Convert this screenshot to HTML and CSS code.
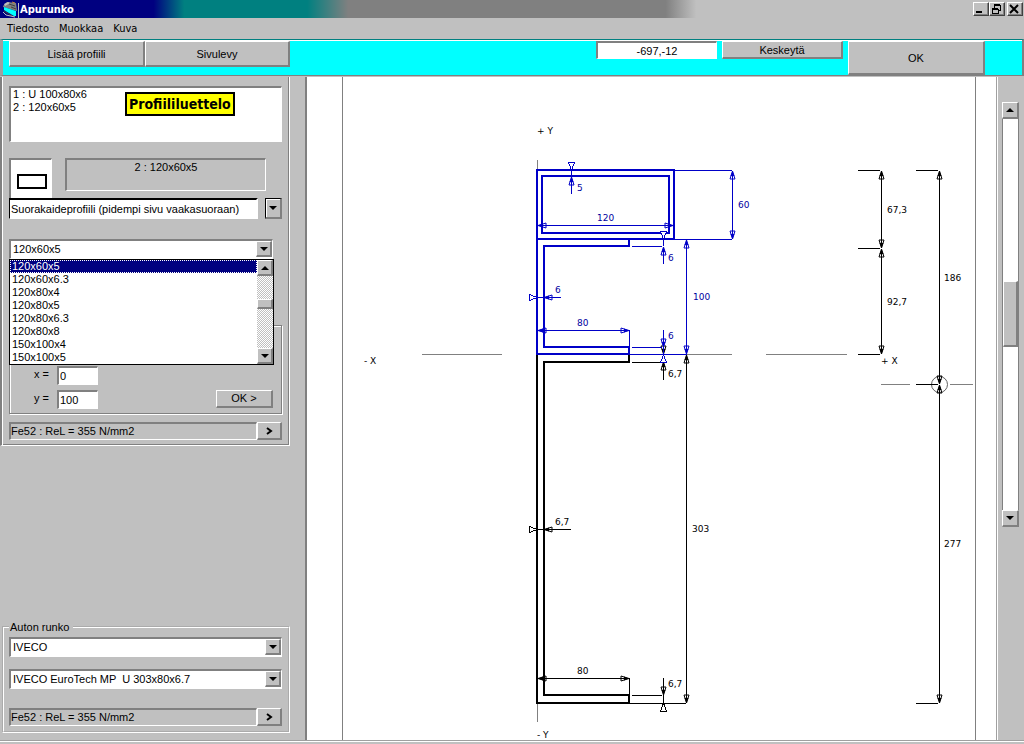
FILE: index.html
```html
<!DOCTYPE html>
<html lang="fi">
<head>
    <meta charset="UTF-8">
    <meta name="viewport" content="width=device-width, initial-scale=1.0">
    <title>Apurunko</title>
    <link rel="stylesheet" href="styles.css">
</head>
<body>
    <header class="titlebar">
        <svg class="app-icon" width="18" height="17" viewBox="0 0 18 17">
            <path d="M1 5L5 1L14 2L15 10L8 8L1 6Z" fill="#808080"/>
            <path d="M2 3L6 1L8 2L3 5Z" fill="#c0c0c0"/>
            <path d="M7 3L13 5M9 6L14 8" stroke="#404040"/>
            <path d="M2 6L14 10V15L12 15L2 9Z" fill="#00ffff"/>
            <path d="M2 10L12 16" stroke="#404040"/>
            <path d="M10 1L13 2" stroke="#c08040"/>
            <path d="M1 11L4 14L13 16M16.5 2V17" stroke="#c0c0c0" fill="none"/>
        </svg>
        <h1 class="title">Apurunko</h1>
        <div class="window-buttons">
            <button class="win-btn" aria-label="Minimize"><svg width="12" height="10"><path d="M2 8H8" stroke="#000" stroke-width="2"/></svg></button>
            <button class="win-btn" aria-label="Restore"><svg width="12" height="10" shape-rendering="crispEdges"><path d="M4 1H10V6H8M4 1V4" stroke="#000" fill="none"/><path d="M4 1H10" stroke="#000" stroke-width="2"/><path d="M2 5H8V9H2Z" stroke="#000" fill="none"/><path d="M2 5H8" stroke="#000" stroke-width="2"/></svg></button>
            <button class="win-btn close" aria-label="Close"><svg width="12" height="10"><path d="M2 1L10 9M10 1L2 9" stroke="#000" stroke-width="2"/></svg></button>
        </div>
    </header>

    <nav class="menubar">
        <button class="menu">Tiedosto</button>
        <button class="menu">Muokkaa</button>
        <button class="menu">Kuva</button>
    </nav>

    <div class="toolbar">
        <button class="btn tool">Lisää profiili</button>
        <button class="btn tool">Sivulevy</button>
        <div class="toolbar-right">
            <input class="sunken coords" type="text" value="-697,-12" aria-label="Koordinaatit">
            <button class="btn cancel">Keskeytä</button>
            <button class="btn ok">OK</button>
        </div>
    </div>

    <main class="workspace">
        <aside class="sidebar">
            <section class="panel">
                <div class="profile-list">
                    <select class="sunken list" size="4" aria-labelledby="list-title">
                        <option>1 : U 100x80x6</option>
                        <option>2 : 120x60x5</option>
                    </select>
                    <strong class="list-title" id="list-title">Profiililuettelo</strong>
                </div>

                <div class="current">
                    <div class="sunken shape"><svg width="32" height="18"><rect x="3" y="3" width="28" height="13" fill="#fff" stroke="#000" stroke-width="2"/></svg></div>
                    <output class="sunken current-name">2 : 120x60x5</output>
                </div>
                <div class="type-row">
                    <input class="type" type="text" value="Suorakaideprofiili (pidempi sivu vaakasuoraan)" aria-label="Profiilityyppi">
                    <button class="btn arrow type-arrow" aria-label="Valitse tyyppi"><svg width="8" height="4"><path d="M0 0H8L4 4Z"/></svg></button>
                </div>

                <div class="size">
                    <div class="sunken combo">
                        <select aria-label="Koko">
                            <option>120x60x5</option>
                        </select>
                        <span class="btn arrow"><svg width="8" height="4"><path d="M0 0H8L4 4Z"/></svg></span>
                    </div>
                    <div class="dropdown">
                        <select class="list" size="8" aria-label="Koot">
                            <option selected>120x60x5</option>
                            <option>120x60x6.3</option>
                            <option>120x80x4</option>
                            <option>120x80x5</option>
                            <option>120x80x6.3</option>
                            <option>120x80x8</option>
                            <option>150x100x4</option>
                            <option>150x100x5</option>
                        </select>
                        <div class="scroll">
                            <button class="btn arrow" aria-label="Ylös"><svg width="8" height="4"><path d="M0 4H8L4 0Z"/></svg></button>
                            <div class="track"><div class="btn thumb"></div></div>
                            <button class="btn arrow" aria-label="Alas"><svg width="8" height="4"><path d="M0 0H8L4 4Z"/></svg></button>
                        </div>
                    </div>
                </div>

                <div class="position">
                    <div class="field">
                        <label for="pos-x">x =</label>
                        <input class="sunken" id="pos-x" type="text" value="0">
                    </div>
                    <div class="field">
                        <label for="pos-y">y =</label>
                        <input class="sunken" id="pos-y" type="text" value="100">
                        <button class="btn apply">OK &gt;</button>
                    </div>
                </div>

                <div class="material">
                    <output class="sunken">Fe52 : ReL = 355 N/mm2</output>
                    <button class="btn more" aria-label="Materiaali"><svg width="8" height="8"><path d="M2 1L6 4L2 7" fill="none" stroke="#000" stroke-width="2"/></svg></button>
                </div>
            </section>

            <fieldset class="frame">
                <legend>Auton runko</legend>
                <div class="sunken combo">
                    <select aria-label="Merkki">
                        <option>IVECO</option>
                    </select>
                    <span class="btn arrow"><svg width="8" height="4"><path d="M0 0H8L4 4Z"/></svg></span>
                </div>
                <div class="sunken combo model">
                    <select aria-label="Malli">
                        <option>IVECO EuroTech MP &nbsp;U 303x80x6.7</option>
                    </select>
                    <span class="btn arrow"><svg width="8" height="4"><path d="M0 0H8L4 4Z"/></svg></span>
                </div>
                <div class="material">
                    <output class="sunken">Fe52 : ReL = 355 N/mm2</output>
                    <button class="btn more" aria-label="Materiaali"><svg width="8" height="8"><path d="M2 1L6 4L2 7" fill="none" stroke="#000" stroke-width="2"/></svg></button>
                </div>
            </fieldset>
        </aside>

        <div class="canvas">
            <svg class="drawing" viewBox="307 77 689 663">
                <defs>
                    <marker id="tip-blue" markerUnits="userSpaceOnUse" markerWidth="20" markerHeight="20" orient="auto-start-reverse" overflow="visible">
                        <path d="M0 0L-8 -2.5V2.5Z" fill="none" stroke="#0000c8"/>
                        <path d="M0 0L-5 -2V2Z" fill="#0000c8"/>
                    </marker>
                    <marker id="tip-black" markerUnits="userSpaceOnUse" markerWidth="20" markerHeight="20" orient="auto-start-reverse" overflow="visible">
                        <path d="M0 0L-8 -2.5V2.5Z" fill="none" stroke="#000"/>
                        <path d="M0 0L-5 -2V2Z" fill="#000"/>
                    </marker>
                </defs>

                <!-- page edges and axes -->
                <g class="axis">
                    <path d="M342.5 77V740M975.5 77V740"/>
                    <path d="M537.5 160V170M537.5 704V722"/>
                    <path d="M422 354.5H502M687 354.5H732M766 354.5H847"/>
                    <path d="M881 384.5H910M950 384.5H973"/>
                </g>
                <circle class="centre" cx="939.5" cy="384.5" r="8"/>

                <!-- vehicle frame, U 303x80x6.7 -->
                <g class="black">
                    <path class="outline" d="M537 354V703H629V695H544V362H629V354"/>
                    <path d="M632 362.5H662M629 703.5H686M632 695.5H662M629.5 678V695"/>
                    <path d="M663.5 354V362M663.5 695V703M537 529.5H544"/>
                    <path class="both" d="M686.5 355V703"/>
                    <path class="both" d="M538 678.5H629"/>
                    <path class="end" d="M571 529.5H544"/>
                    <path class="end" d="M663.5 346V354"/>
                    <path class="end" d="M663.5 380V362"/>
                    <path class="end" d="M663.5 678V695"/>
                    <path class="head" d="M537 529.5L529.5 526.5V532.5Z"/>
                    <path class="head" d="M663.5 703L660.5 711.5H666.5Z"/>
                </g>

                <!-- profile 1, U 100x80x6, and profile 2, 120x60x5 -->
                <g class="blue">
                    <path class="outline" d="M629 239V246H544V347H629V354H537V239"/>
                    <rect class="outline" x="537" y="170" width="137" height="69"/>
                    <rect class="outline" x="542" y="176" width="127" height="57"/>
                    <path d="M674 170.5H732M674 239.5H732M632 246.5H662M632 347.5H662M629 354.5H687M629.5 330V347"/>
                    <path d="M571.5 163V176M663.5 239V246M663.5 347V354M537 297.5H544"/>
                    <path class="both" d="M732.5 171V239"/>
                    <path class="both" d="M538 225.5H673"/>
                    <path class="both" d="M686.5 240V354"/>
                    <path class="both" d="M538 330.5H629"/>
                    <path class="end" d="M571.5 194V177"/>
                    <path class="end" d="M663.5 264V247"/>
                    <path class="end" d="M561 297.5H544"/>
                    <path class="end" d="M663.5 330V347"/>
                    <path class="head" d="M571.5 170L568.5 162.5H574.5Z"/>
                    <path class="head" d="M663.5 239L660.5 231.5H666.5Z"/>
                    <path class="head" d="M537 297.5L529.5 294.5V300.5Z"/>
                    <path class="head" d="M663.5 355L660.5 362.5H666.5Z"/>
                </g>

                <!-- centre of gravity dimensions -->
                <g class="black">
                    <path d="M858 170.5H880M858 248.5H880M858 354.5H880"/>
                    <path d="M916 170.5H938M916 384.5H938M916 703.5H938"/>
                    <path class="both" d="M881.5 171V248"/>
                    <path class="both" d="M881.5 249V354"/>
                    <path class="both" d="M939.5 171V384"/>
                    <path class="both" d="M939.5 385V703"/>
                </g>

                <g class="text">
                    <text x="537" y="134">+ Y</text>
                    <text x="537" y="738">- Y</text>
                    <text x="364" y="364">- X</text>
                    <text x="881" y="364">+ X</text>
                    <text x="668" y="377">6,7</text>
                    <text x="668" y="687">6,7</text>
                    <text x="555" y="525">6,7</text>
                    <text x="577" y="674">80</text>
                    <text x="692" y="532">303</text>
                    <text x="887" y="213">67,3</text>
                    <text x="887" y="305">92,7</text>
                    <text x="944" y="281">186</text>
                    <text x="944" y="547">277</text>
                </g>
                <g class="text text-blue">
                    <text x="577" y="191">5</text>
                    <text x="597" y="221">120</text>
                    <text x="738" y="208">60</text>
                    <text x="668" y="261">6</text>
                    <text x="668" y="339">6</text>
                    <text x="555" y="293">6</text>
                    <text x="577" y="326">80</text>
                    <text x="693" y="300">100</text>
                </g>
            </svg>
        </div>

        <div class="scroll-area">
            <div class="scroll canvas-scroll">
                <button class="btn arrow" aria-label="Vieritä ylös"><svg width="8" height="4"><path d="M0 4H8L4 0Z"/></svg></button>
                <div class="track"><div class="btn thumb"></div></div>
                <button class="btn arrow" aria-label="Vieritä alas"><svg width="8" height="4"><path d="M0 0H8L4 4Z"/></svg></button>
            </div>
        </div>
    </main>
    <footer class="statusbar"></footer>
</body>
</html>
```
FILE: styles.css
```css
* {
    box-sizing: border-box;
}

body {
    margin: 0;
    min-height: 100vh;
    display: flex;
    flex-direction: column;
    background: #c0c0c0;
    color: #000;
    font-family: "Liberation Sans", Arial, sans-serif;
    font-size: 11px;
    line-height: 13px;
}

button, input, select, output {
    font: inherit;
    color: inherit;
    margin: 0;
    padding: 0;
    border: 0;
    border-radius: 0;
    outline: 0;
}

svg {
    display: block;
}

/* 3D borders */
.btn {
    display: flex;
    align-items: center;
    justify-content: center;
    background: #c0c0c0;
    border: solid;
    border-width: 1px 2px 2px 1px;
    border-color: #fff #808080 #808080 #fff;
}

.sunken {
    background: #fff;
    border: solid;
    border-width: 2px 1px 1px 2px;
    border-color: #808080 #fff #fff #808080;
}

/* title bar */
.titlebar {
    display: flex;
    align-items: center;
    height: 18px;
    padding: 0 1px 0 2px;
    background: linear-gradient(to right, #000080 15%, #008080 18%, #008080 30%, #808080 34%, #808080 65%, #c0c0c0 68%);
}

.title {
    margin: 0;
    color: #fff;
    font-family: "DejaVu Sans Condensed", "DejaVu Sans", sans-serif;
    font-size: 11px;
    font-weight: bold;
}

.window-buttons {
    display: flex;
    margin-left: auto;
}

.win-btn {
    width: 16px;
    height: 14px;
    background: #c0c0c0;
    border: 1px solid;
    border-color: #fff #404040 #404040 #fff;
    box-shadow: inset -1px -1px #808080;
}

.close {
    margin-left: 2px;
}

.menubar {
    display: flex;
    gap: 10px;
    height: 21px;
    padding: 3px 7px;
    font-family: "DejaVu Sans Condensed", "DejaVu Sans", sans-serif;
}

.menu {
    background: none;
    line-height: 14px;
}

/* toolbar */
.toolbar {
    display: flex;
    align-items: flex-start;
    height: 37px;
    padding: 1px 37px 0 6px;
    background: #00ffff;
    border: solid;
    border-width: 1px 2px 1px 3px;
    border-color: #008080 #808080 #808080 #a0a0a0;
    box-shadow: inset 0 1px #fff;
    margin-bottom: 1px;
}

.tool {
    width: 136px;
    height: 26px;
    padding-top: 2px;
}

.tool + .tool {
    width: 145px;
}

.toolbar-right {
    display: flex;
    align-items: flex-start;
    gap: 5px;
    margin-left: auto;
}

.coords {
    width: 121px;
    height: 18px;
    text-align: center;
}

.cancel {
    width: 121px;
    height: 18px;
    padding-top: 2px;
}

.ok {
    width: 137px;
    height: 34px;
    padding-top: 2px;
}

/* work area */
.workspace {
    flex: 1;
    display: flex;
}

.sidebar {
    width: 307px;
    flex: none;
    display: flex;
    flex-direction: column;
    justify-content: space-between;
    padding-bottom: 7px;
    border-right: 2px solid #808080;
}

.panel {
    width: 290px;
    padding: 9px 7px 5px;
    border: solid;
    border-width: 0 1px 1px 2px;
    border-color: #fff #fff #fff #808080;
    box-shadow: inset 1px 0 #fff, inset -1px -1px #808080;
}

.list {
    display: block;
    width: 100%;
    overflow: hidden;
    background: #fff;
}

.list option {
    padding: 0 2px;
    min-height: 13px;
    line-height: 13px;
}

.list option:checked {
    background: #000080 linear-gradient(#000080, #000080);
    outline: 1px dotted #fff;
    outline-offset: -1px;
    -webkit-text-fill-color: #fff;
}

.profile-list {
    position: relative;
    margin-bottom: 16px;
}

.profile-list .list {
    height: 56px;
}

.list-title {
    position: absolute;
    top: 6px;
    left: 116px;
    padding: 2px;
    background: #ffff00;
    border: 2px solid #000;
    font-family: "DejaVu Sans Condensed", "DejaVu Sans", sans-serif;
    font-size: 14px;
    line-height: 16px;
}

.current {
    display: flex;
    gap: 13px;
    height: 40px;
}

.shape {
    width: 43px;
    padding: 12px 4px;
    border-bottom: 0;
}

.current-name {
    width: 201px;
    height: 33px;
    padding-top: 1px;
    background: #c0c0c0;
    text-align: center;
}

.type-row {
    display: flex;
    justify-content: space-between;
    height: 21px;
    margin-bottom: 20px;
}

.type {
    width: 249px;
    padding: 0 1px;
    background: #fff;
    border: solid;
    border-width: 2px 2px 1px 1px;
    border-color: #000 #fff #fff #000;
}

.arrow {
    flex: none;
    width: 16px;
    height: 16px;
}

.type-arrow {
    width: 17px;
    height: 21px;
    border-top: 1px solid #000;
    border-left: 1px solid #000;
    box-shadow: inset 1px 1px #fff;
}

.combo {
    display: flex;
    height: 20px;
}

.combo select {
    flex: 1;
    min-width: 0;
    padding-left: 2px;
    appearance: none;
    background: #fff;
}

.size {
    position: relative;
    width: 264px;
    margin-bottom: 66px;
}

.dropdown {
    position: absolute;
    top: 100%;
    left: 0;
    display: flex;
    width: 265px;
    background: #fff;
    border: 1px solid #000;
}

.dropdown .list {
    flex: 1;
    height: 104px;
}

.scroll {
    display: flex;
    flex-direction: column;
    flex: none;
    width: 16px;
}

.track {
    flex: 1;
    background: repeating-conic-gradient(#fff 0 25%, #c0c0c0 0 50%) 0 0 / 2px 2px;
}

.dropdown .thumb {
    height: 10px;
    margin-top: 23px;
}

.position {
    display: flex;
    flex-direction: column;
    gap: 5px;
    padding: 40px 8px 4px 24px;
    border: 1px solid #808080;
    box-shadow: 1px 1px #fff, inset 1px 1px #fff;
    margin-bottom: 8px;
}

.field {
    display: flex;
    height: 19px;
}

.field label {
    width: 23px;
    line-height: 16px;
}

.field input {
    width: 41px;
    padding: 0 1px;
}

.apply {
    width: 57px;
    height: 18px;
    margin-left: auto;
}

.material {
    display: flex;
    height: 18px;
}

.material output {
    flex: 1;
    background: #c0c0c0;
    line-height: 15px;
}

.more {
    width: 25px;
}

.frame {
    width: 288px;
    margin: 0 0 0 2px;
    padding: 3px 6px 5px 5px;
    border: 2px groove #fff;
}

.frame legend {
    padding: 0 4px 0 1px;
    line-height: 14px;
}

.model {
    margin: 12px 0 19px;
}

/* drawing */
.canvas {
    flex: 1;
    background: #fff;
    border-right: 1px solid #a0a0a0;
}

.drawing {
    width: 100%;
}

.axis, .black, .blue {
    fill: none;
    shape-rendering: crispEdges;
}

.axis {
    stroke: #808080;
}

.centre {
    fill: none;
    stroke: #606060;
}

.black {
    stroke: #000;
}

.blue {
    stroke: #0000c8;
}

.outline {
    stroke-width: 2;
}

.head {
    fill: #fff;
}

.black .both {
    marker-start: url(#tip-black);
    marker-end: url(#tip-black);
}

.black .end {
    marker-end: url(#tip-black);
}

.blue .both {
    marker-start: url(#tip-blue);
    marker-end: url(#tip-blue);
}

.blue .end {
    marker-end: url(#tip-blue);
}

.text {
    font-family: "DejaVu Sans", sans-serif;
    font-size: 9px;
}

.text-blue {
    fill: #0000a0;
}

.scroll-area {
    flex: none;
    width: 27px;
    padding: 25px 4px 0;
    border-left: 1px solid #fff;
}

.canvas-scroll {
    width: 17px;
    height: 425px;
}

.canvas-scroll .arrow {
    width: 17px;
    height: 17px;
}

.canvas-scroll .track {
    background: #fff;
    border: solid #808080;
    border-width: 0 1px;
}

.canvas-scroll .thumb {
    height: 66px;
    margin-top: 162px;
}

.statusbar {
    height: 4px;
    border-top: 1px solid #a0a0a0;
    box-shadow: inset 0 1px #fff;
}
```
